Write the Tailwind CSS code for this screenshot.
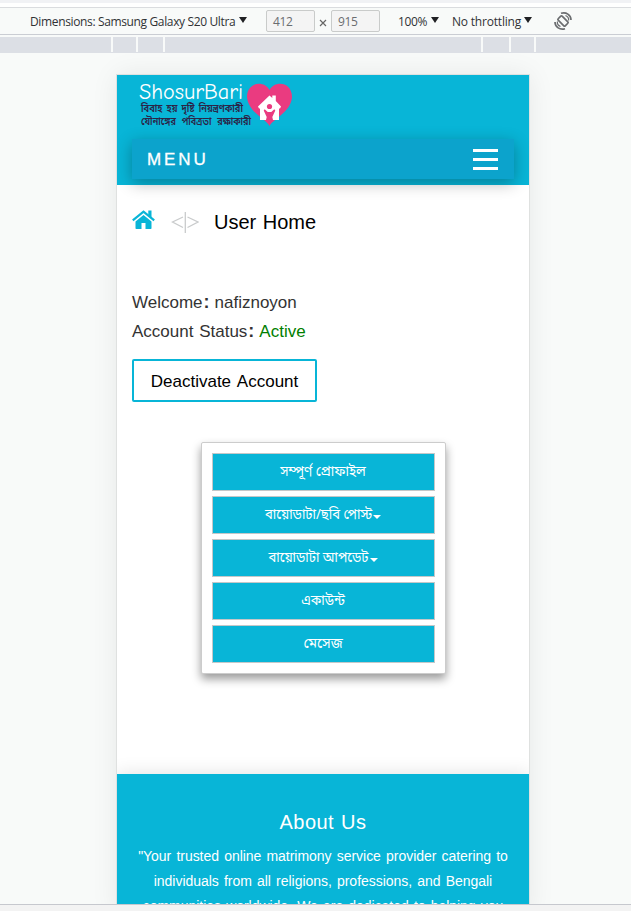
<!DOCTYPE html>
<html lang="bn">
<head>
<meta charset="utf-8">
<title>User Home</title>
<script src="https://cdn.jsdelivr.net/npm/@tailwindcss/browser@4"></script>
</head>
<body class="w-[631px] h-[911px] overflow-hidden bg-[#f8faf9] font-['Liberation_Sans','Noto_Sans',sans-serif]">
<div class="flex h-[911px] flex-col">
  <div class="h-[3px] shrink-0 bg-[#f1f2f5]"></div>
  <div class="h-1 shrink-0 bg-white"></div>
  <header class="flex h-7 shrink-0 items-center border-y border-t-[#dadcdf] border-b-[#cacdd3] pl-[30px] font-['Open_Sans','Noto_Sans',sans-serif] text-[12px] text-[#303235] whitespace-nowrap">
    <div class="w-[209px] pt-px tracking-[-0.36px]">Dimensions: Samsung Galaxy S20 Ultra</div>
    <svg class="mb-[3px] h-[6px] w-[8px]" viewBox="0 0 8 6"><path d="M0 0h8L4 6z" fill="#202124"/></svg>
    <div class="ml-[19px] h-[22px] w-[49px] rounded-[2px] border border-[#c9cbca] bg-[#f4f4f4] pl-1.5 leading-[21px] tracking-[-0.4px] text-[#6b6d70]">412</div>
    <svg class="mx-1 mt-1 size-2" viewBox="0 0 8 8"><path d="M1 1l6 6M7 1L1 7" stroke="#666" stroke-width="1.2"/></svg>
    <div class="h-[22px] w-[49px] rounded-[2px] border border-[#c9cbca] bg-[#f4f4f4] pl-1.5 leading-[21px] tracking-[-0.4px] text-[#6b6d70]">915</div>
    <div class="ml-[18px] w-[33px] pt-px tracking-[-0.4px]">100%</div>
    <svg class="mb-[3px] h-[6px] w-[8px]" viewBox="0 0 8 6"><path d="M0 0h8L4 6z" fill="#202124"/></svg>
    <div class="ml-[13px] w-[72px] pt-px tracking-[-0.2px]">No throttling</div>
    <svg class="mb-[3px] h-[6px] w-[8px]" viewBox="0 0 8 6"><path d="M0 0h8L4 6z" fill="#202124"/></svg>
    <svg class="ml-[21px] size-5" viewBox="0 0 20 20" fill="none" stroke="#6b6d70" stroke-width="1.700"><rect x="5" y="7.200" width="10" height="5.600" rx="1" transform="rotate(45 10 10)"/><path d="M8 2.300C13 .5 18 4 18 9M12 17.700C7 19.500 2 16 2 11"/><path d="M12.500 4.500C15 5.500 15.800 8 15.600 9.500M7.500 15.500C5 14.500 4.200 12 4.400 10.500" stroke-width="1.200"/></svg>
  </header>
  <div class="mt-[2px] flex h-4 shrink-0 gap-[2px] border-b border-[#dcdfe5] [&>i]:bg-[#dcdfe5]">
    <i class="w-[111px]"></i><i class="w-[23px]"></i><i class="w-[25px]"></i><i class="w-[316px]"></i><i class="w-[26px]"></i><i class="w-[23px]"></i><i class="flex-1"></i>
  </div>
  <main class="h-[851px] min-h-0 flex-1 overflow-hidden pt-[22px]">
    <div class="ml-[117px] flex h-[840px] w-[412px] flex-col bg-white shadow-[0_0_0_1px_#dfe1e0,0_0_26px_rgba(0,0,0,0.08)]">
      <div class="h-[110px] shrink-0 bg-[#08b5d7]">
        <svg class="ml-[20px] block h-[64px] w-[160px]" viewBox="0 0 160 64">
          <text x="2" y="23.500" class="font-['Z003','URW_Chancery_L','Comic_Neue','Lato',cursive]" font-size="22" fill="#fff" textLength="104" lengthAdjust="spacingAndGlyphs">ShosurBari</text>
          <g class="font-['Noto_Sans_Bengali','Noto_Sans',sans-serif] font-semibold" fill="#2b2346">
            <text x="4" y="36.500" font-size="10.500" word-spacing="2" textLength="102" lengthAdjust="spacingAndGlyphs">বিবাহ হয় দৃষ্টি নিয়ন্ত্রণকারী</text>
            <text x="4" y="50" font-size="10.500" word-spacing="4" textLength="110" lengthAdjust="spacingAndGlyphs">যৌনাঙ্গের পবিত্রতা রক্ষাকারী</text>
          </g>
          <path d="M132.500 51C129 44 111 37 110 22c0-15 17-17 22.500-7C138 5 155 7 155 22c-1 15-19 22-22.500 29z" fill="#ea3b80"/>
          <path d="M122 33.500l-1-2L132.500 20.500l2.800 2.500v-2.500h3.500V26l5.200 5.500-1 2h-1V45h-6l-.7-3 3-6.500-1-1.200-3 2.700h-3.600l-3-2.700-1 1.200 3 6.500-.7 3h-6V33.500z" fill="#fff"/>
          <circle cx="132.500" cy="31.500" r="2.600" fill="#ea3b80"/>
        </svg>
        <nav class="mx-[15px] flex h-10 items-center justify-between bg-[#0ca3cc] pl-[15px] pr-4 shadow-[0_4px_16px_rgba(0,0,0,0.30)]">
          <span class="pt-px text-[17px] tracking-[2.900px] text-white [-webkit-text-stroke:0.3px_white]">MENU</span>
          <span class="flex w-[25px] flex-col gap-[6px] [&>i]:h-[3px] [&>i]:bg-white"><i></i><i></i><i></i></span>
        </nav>
      </div>
      <div class="flex h-[74px] shrink-0 items-center pl-[15px]">
        <svg class="mb-[5px] h-[19px] w-[23px]" viewBox="0 0 23 19" fill="#08b5d7"><path d="M3.500 11.500L11.500 5l8 6.500v6.700q0 .8-.8.800H13.500v-6h-4v6H4.300q-.8 0-.8-.8z"/><path d="M.8 10.300L11.500 1.600l10.700 8.700" fill="none" stroke="#08b5d7" stroke-width="2.200"/><path d="M16.300.5h3.200V8l-3.200-2.500z"/></svg>
        <svg class="ml-4 h-[22px] w-[28px]" viewBox="0 0 28 22" fill="none" stroke="#c9cbcc" stroke-width="1.300"><path d="M12 6L1.500 11 12 16.500M16.500 6L27 11l-10.500 5.500M14.300 1v21"/></svg>
        <h1 class="ml-[15px] text-[20px] text-black [word-spacing:1px]">User Home</h1>
      </div>
      <section class="mt-[29px] h-[154px] shrink-0 pl-[15px] text-[17px] text-[#333]">
        <p class="h-[29px] leading-[29px]">Welcome<b class="mr-[5px] ml-[1px] text-[18px]">:</b>nafiznoyon</p>
        <p class="h-[29px] leading-[29px] [word-spacing:1px]">Account Status<b class="mr-[5px] ml-[1px] text-[18px]">:</b><span class="text-[#008000]">Active</span></p>
        <button class="mt-[13px] h-[43px] w-[185px] rounded-[2px] border-2 border-[#08b5d7] bg-white pt-[2px] text-[17px] text-black [word-spacing:2px]">Deactivate Account</button>
      </section>
      <section class="mx-auto flex h-[232px] w-[245px] shrink-0 flex-col gap-[5px] rounded-[2px] border border-[#ccc] bg-white p-[10px] shadow-[0_5px_10px_rgba(0,0,0,0.40)] font-['Noto_Sans_Bengali','Noto_Sans',sans-serif] text-[15px] text-white [&>a]:flex [&>a]:h-[38px] [&>a]:items-center [&>a]:justify-center [&>a]:border [&>a]:border-[#c4c8c9] [&>a]:bg-[#08b5d7] [&_span]:inline-block">
        <a><span class="scale-x-[0.89]">সম্পূর্ণ প্রোফাইল</span></a>
        <a><span class="-mx-[8px] scale-x-[0.87]">বায়োডাটা/ছবি পোস্ট</span><i class="ml-px mt-[3px] border-x-4 border-t-4 border-x-transparent border-t-white"></i></a>
        <a><span class="-mx-[7px] scale-x-[0.87]">বায়োডাটা আপডেট</span><i class="ml-px mt-[3px] border-x-4 border-t-4 border-x-transparent border-t-white"></i></a>
        <a><span class="scale-x-[0.87]">একাউন্ট</span></a>
        <a><span class="scale-x-[0.93]">মেসেজ</span></a>
      </section>
      <footer class="mt-[100px] flex-1 bg-[#08b5d7] pt-[33px] text-center text-white shadow-[0_0_18px_rgba(0,0,0,0.12)] [clip-path:inset(-20px_0_0_0)]">
        <h2 class="text-[20px] leading-[30px] tracking-[0.45px] [word-spacing:1px]">About Us</h2>
        <p class="mt-[7px] text-[14px] leading-[25px] whitespace-nowrap tracking-[-0.030px] [word-spacing:1.300px]">"Your trusted online matrimony service provider catering to<br>individuals from all religions, professions, and Bengali<br>communities worldwide. We are dedicated to helping you</p>
      </footer>
    </div>
  </main>
  <div class="relative h-[7px] shrink-0 border-t border-[#c6c8ce] bg-[#f3f3f3]"></div>
</div>
</body>
</html>
